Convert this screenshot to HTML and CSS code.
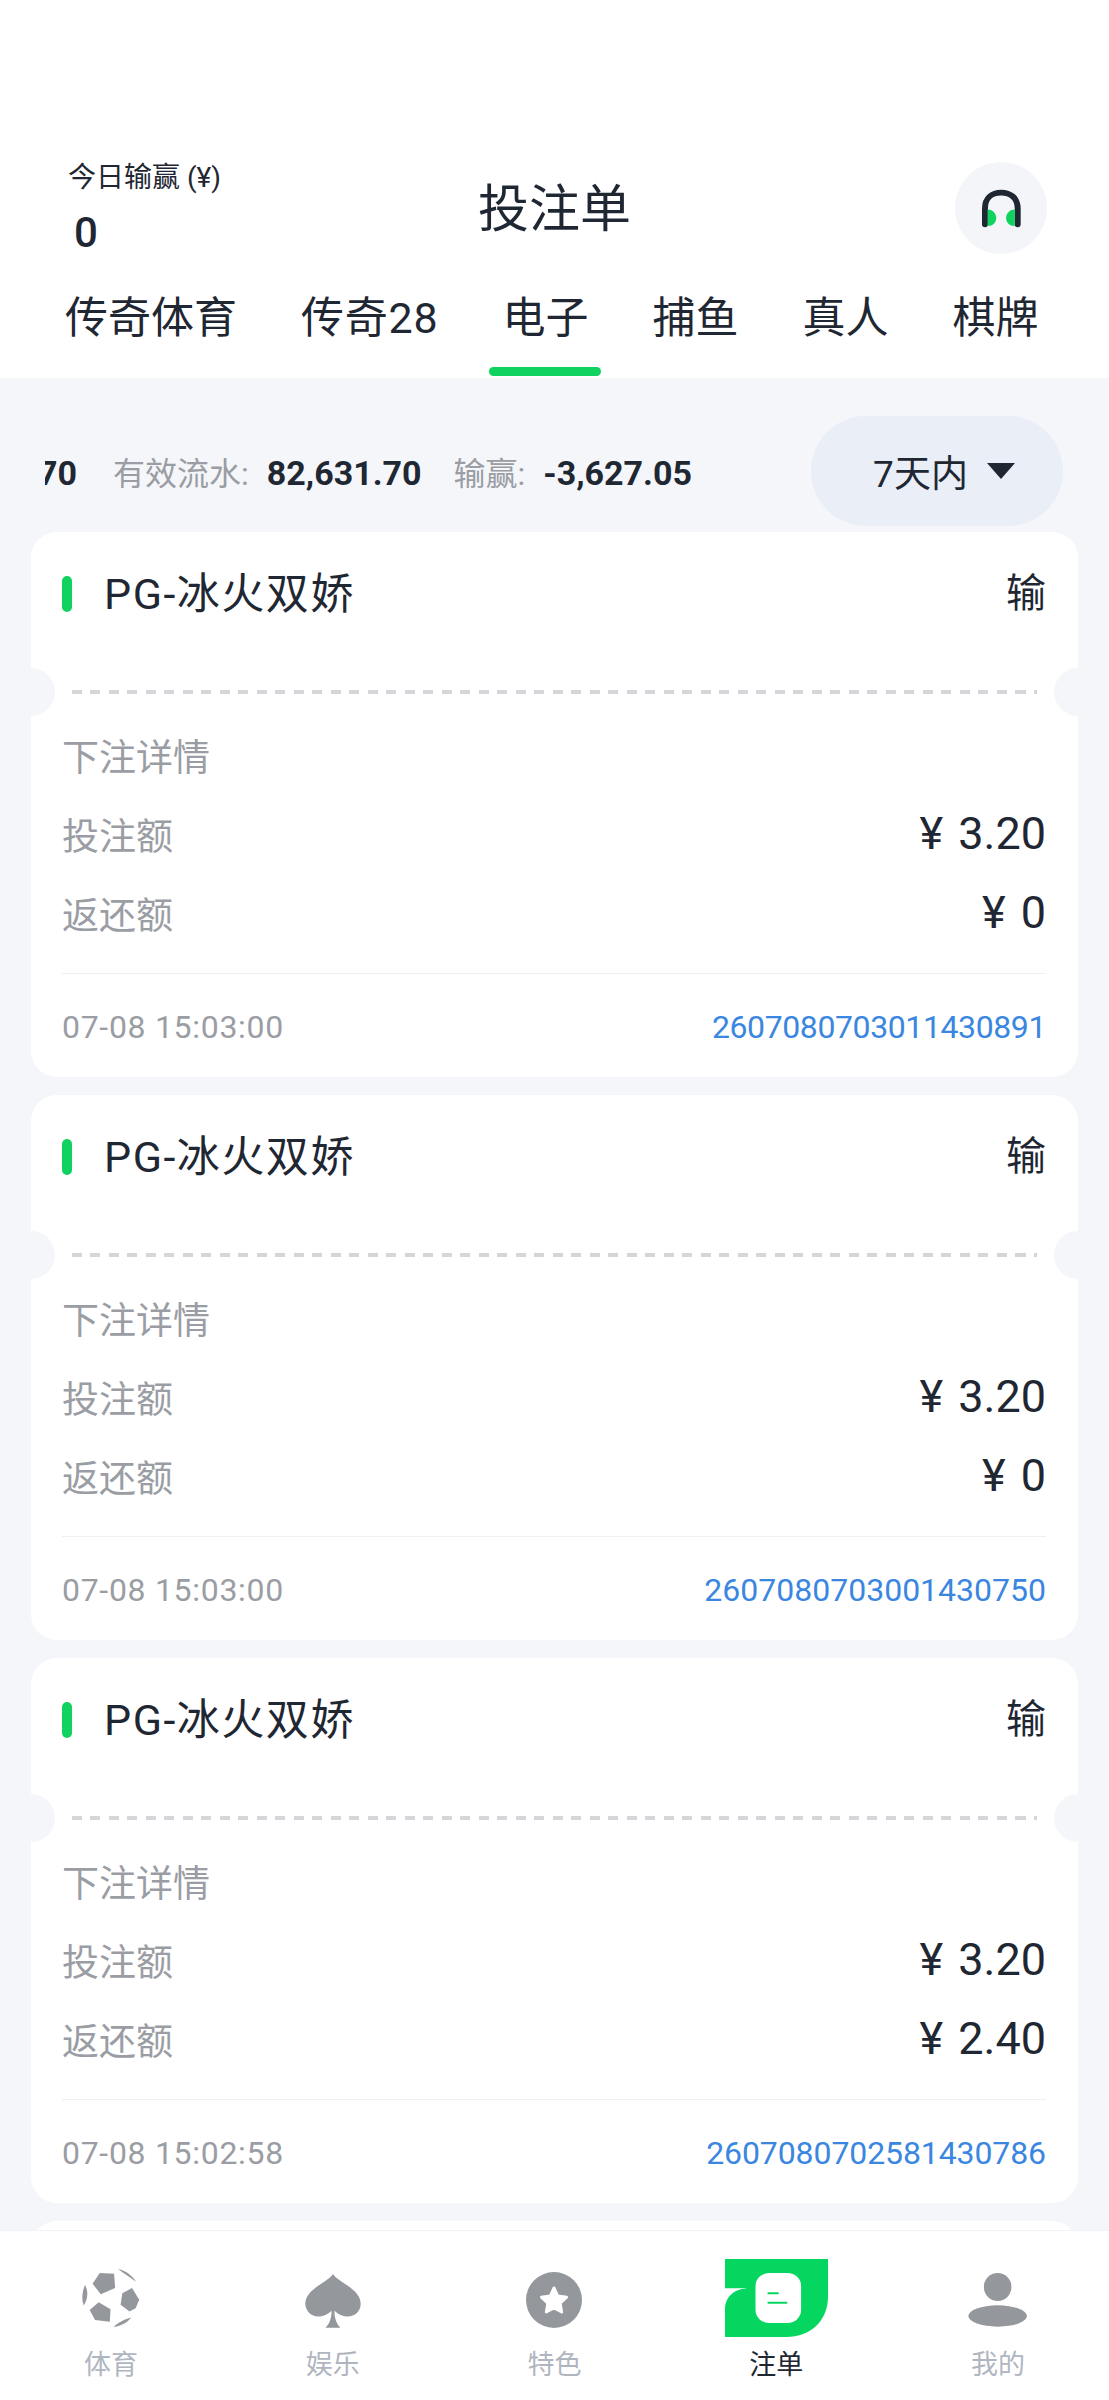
FILE: index.html
```html
<!DOCTYPE html>
<html lang="zh-CN">

<head>
    <meta charset="UTF-8">
    <meta name="viewport" content="width=device-width, initial-scale=1.0">
    <title>投注单</title>
    <link rel="stylesheet" href="styles.css">
</head>

<body>
    <header class="top">
        <div class="title-row">
            <div class="today">
                <div class="today-label">今日输赢 (¥)</div>
                <div class="today-value">0</div>
            </div>
            <h1 class="title">投注单</h1>
            <div class="support">
                <svg width="43" height="41" viewBox="150 110 128 124">
                    <path d="M164 220 V172 C164 140 185 124 213 124 C241 124 263 140 263 172 V220" fill="none" stroke="#1f2733" stroke-width="18" stroke-linecap="round"/>
                    <path d="M172 175 C190 175 198 190 198 200 C198 215 188 225 172 225Z" fill="#0fd25f"/>
                    <path d="M254 175 C236 175 228 190 228 200 C228 215 238 225 254 225Z" fill="#0fd25f"/>
                </svg>
            </div>
        </div>
        <nav class="tabs">
            <span class="tab">传奇体育</span>
            <span class="tab wide">传奇28</span>
            <span class="tab active">电子</span>
            <span class="tab">捕鱼</span>
            <span class="tab">真人</span>
            <span class="tab">棋牌</span>
        </nav>
    </header>

    <main class="content">
        <div class="stats-row">
            <div class="stats">
                <b class="cut">70</b>
                <span class="stat-label">有效流水:</span><b class="stat-value">82,631.70</b>
                <span class="stat-label second">输赢:</span><b class="stat-value">-3,627.05</b>
            </div>
            <div class="range">7天内<i class="arrow"></i></div>
        </div>

        <section class="card">
            <div class="card-head">
                <span class="mark"></span>
                <span class="game">PG-冰火双娇</span>
                <span class="result">输</span>
            </div>
            <div class="dash"></div>
            <div class="detail-title">下注详情</div>
            <div class="line"><span>投注额</span><span class="money">¥ 3.20</span></div>
            <div class="line"><span>返还额</span><span class="money">¥ 0</span></div>
            <div class="card-foot"><span class="time">07-08 15:03:00</span><span class="order tight">2607080703011430891</span></div>
        </section>

        <section class="card">
            <div class="card-head">
                <span class="mark"></span>
                <span class="game">PG-冰火双娇</span>
                <span class="result">输</span>
            </div>
            <div class="dash"></div>
            <div class="detail-title">下注详情</div>
            <div class="line"><span>投注额</span><span class="money">¥ 3.20</span></div>
            <div class="line"><span>返还额</span><span class="money">¥ 0</span></div>
            <div class="card-foot"><span class="time">07-08 15:03:00</span><span class="order">2607080703001430750</span></div>
        </section>

        <section class="card">
            <div class="card-head">
                <span class="mark"></span>
                <span class="game">PG-冰火双娇</span>
                <span class="result">输</span>
            </div>
            <div class="dash"></div>
            <div class="detail-title">下注详情</div>
            <div class="line"><span>投注额</span><span class="money">¥ 3.20</span></div>
            <div class="line"><span>返还额</span><span class="money">¥ 2.40</span></div>
            <div class="card-foot"><span class="time">07-08 15:02:58</span><span class="order mid">2607080702581430786</span></div>
        </section>

        <section class="card"></section>
    </main>

    <footer class="tabbar">
        <div class="nav-item">
            <div class="nav-icon">
                <svg width="61" height="61" viewBox="220 262 170 182" preserveAspectRatio="none" fill="#94979c">
                    <path d="M275 280 L315 282 L318 325 L278 343 L255 312Z"/>
                    <path d="M365 325 L385 360 L375 385 L358 395 L333 375 L338 340Z"/>
                    <path d="M272 367 L305 388 L303 425 L262 420 L247 390Z"/>
                    <path d="M326 267 C350 274 366 288 376 306 C358 290 340 280 326 267Z"/>
                    <path d="M234 316 C226 335 224 358 230 377 C242 360 244 335 234 316Z"/>
                    <path d="M314 441 C335 438 352 428 363 413 C345 418 325 428 314 441Z"/>
                </svg>
            </div>
            <span>体育</span>
        </div>
        <div class="nav-item">
            <div class="nav-icon">
                <svg width="56" height="54" viewBox="850 275 158 162" preserveAspectRatio="none" fill="#94979c">
                    <path d="M929 275 C915 300 850 320 851 365 C852 398 890 420 925 385 C925 410 918 425 908 436 L950 436 C940 425 933 410 933 385 C968 420 1007 398 1007 365 C1008 320 943 300 929 275Z"/>
                </svg>
            </div>
            <span>娱乐</span>
        </div>
        <div class="nav-item">
            <div class="nav-icon">
                <svg width="56" height="56" viewBox="0 0 60 60">
                    <circle cx="30" cy="30" r="30" fill="#94979c"/>
                    <path d="M30 17 L34 25.500 L43.500 27 L36.700 33.500 L38.300 43 L30 38.500 L21.700 43 L23.300 33.500 L16.500 27 L26 25.500Z" fill="#fff" stroke="#fff" stroke-width="3" stroke-linejoin="round"/>
                </svg>
            </div>
            <span>特色</span>
        </div>
        <div class="nav-item current">
            <div class="nav-icon">
                <svg width="103" height="78" viewBox="490 238 287 232" preserveAspectRatio="none">
                    <path d="M490 238 H777 V350 C777 420 730 470 660 470 H490 V390 C490 350 515 325 560 325 H490Z" fill="#05d660"/>
                    <rect x="575" y="280" width="127" height="148" rx="38" fill="#fff"/>
                    <path d="M611 340 H637 M611 368 H661" stroke="#05d660" stroke-width="6" stroke-linecap="round"/>
                </svg>
            </div>
            <span>注单</span>
        </div>
        <div class="nav-item">
            <div class="nav-icon">
                <svg width="60" height="55" viewBox="1170 275 170 165" preserveAspectRatio="none" fill="#94979c">
                    <ellipse cx="1254" cy="317" rx="39" ry="42"/>
                    <ellipse cx="1254" cy="404" rx="83" ry="32"/>
                </svg>
            </div>
            <span>我的</span>
        </div>
    </footer>
</body>

</html>
```

FILE: styles.css
```css
* {
    box-sizing: border-box;
}

html, body {
    height: 2400px;
    overflow: hidden;
}

body {
    margin: 0;
    background-color: #f4f6fa;
    color: #1f2733;
    font-family: Roboto, "Noto Sans CJK SC", sans-serif;
    position: relative;
}

.top {
    height: 378px;
    padding: 150px 0 0;
    background-color: #fff;
}

.title-row {
    display: flex;
    justify-content: space-between;
    align-items: flex-start;
    height: 137px;
    padding: 0 62px 0 68px;
    position: relative;
}

.today-label {
    font-size: 28px;
    line-height: 50px;
    padding-top: 3px;
}

.today-value {
    font-size: 42px;
    font-weight: 500;
    line-height: 54px;
    padding: 3px 0 0 6px;
}

.title {
    position: absolute;
    left: 0;
    right: 0;
    top: 30px;
    margin: 0;
    font-size: 51px;
    font-weight: 400;
    line-height: 60px;
    text-align: center;
}

.support {
    width: 92px;
    height: 92px;
    margin-top: 12px;
    border-radius: 50%;
    background-color: #f3f5f9;
    display: flex;
    align-items: center;
    justify-content: center;
}

.tabs {
    display: flex;
    padding: 0 0 0 65px;
    font-size: 43px;
    line-height: 62px;
    height: 91px;
}

.tab {
    margin-right: 64px;
    white-space: nowrap;
    position: relative;
    height: 91px;
}

.tab.wide {
    letter-spacing: 0.8px;
}

.tab.active::after {
    content: "";
    position: absolute;
    left: -14px;
    right: -12px;
    top: 80px;
    height: 9px;
    border-radius: 5px;
    background-color: #0fd25f;
}

.content {
    height: 2022px;
    overflow: hidden;
    padding: 38px 31px 0;
    display: flex;
    flex-direction: column;
    gap: 18px;
}

.stats-row {
    display: flex;
    align-items: center;
    justify-content: space-between;
    flex: none;
    height: 110px;
    padding: 0 15px 0 14px;
    margin-bottom: -12px;
}

.stats {
    width: 720px;
    overflow: hidden;
    display: flex;
    align-items: baseline;
    white-space: nowrap;
    font-size: 32px;
}

.stats b {
    font-size: 34px;
    font-weight: 700;
    color: #1f2733;
}

.cut {
    margin-left: -7px;
    margin-right: 36px;
}

.stat-label {
    color: #9a9da3;
    margin-right: 18px;
}

.stat-label.second {
    margin-left: 32px;
}

.range {
    width: 252px;
    height: 110px;
    padding-left: 14px;
    border-radius: 55px;
    background-color: #e9eef7;
    display: flex;
    align-items: center;
    justify-content: center;
    gap: 19px;
    font-size: 37px;
}

.arrow {
    width: 0;
    height: 0;
    border-left: 14px solid transparent;
    border-right: 14px solid transparent;
    border-top: 16px solid #1f2733;
}

.card {
    height: 545px;
    flex: none;
    background-color: #fff;
    border-radius: 26px;
    padding: 0 32px 0 31px;
    position: relative;
    overflow: hidden;
}

.card::before,
.card::after {
    content: "";
    position: absolute;
    top: 136px;
    width: 48px;
    height: 48px;
    border-radius: 50%;
    background-color: #f4f6fa;
}

.card::before {
    left: -24px;
}

.card::after {
    right: -24px;
}

.card-head {
    display: flex;
    align-items: center;
    height: 124px;
    font-size: 40px;
}

.mark {
    width: 10px;
    height: 36px;
    border-radius: 5px;
    background-color: #0fd25f;
    margin-right: 32px;
}

.game {
    flex: 1;
    font-size: 43px;
    letter-spacing: 1.500px;
    padding-bottom: 8px;
}

.result {
    padding-bottom: 8px;
}

.dash {
    height: 4px;
    margin: 34px 9px 0 10px;
    background-image: repeating-linear-gradient(90deg, #d5d6d9 0, #d5d6d9 10px, transparent 10px, transparent 18.500px);
}

.detail-title {
    margin-top: 40px;
    font-size: 37px;
    line-height: 50px;
    color: #9a9da3;
}

.line {
    display: flex;
    justify-content: space-between;
    align-items: center;
    height: 79px;
    font-size: 37px;
    color: #9a9da3;
}

.detail-title + .line {
    margin-top: 10px;
}

.money {
    font-size: 45px;
    word-spacing: 4px;
    color: #1f2733;
}

.card-foot {
    margin-top: 21px;
    border-top: 1px solid #eff0f3;
    display: flex;
    justify-content: space-between;
    align-items: center;
    height: 107px;
    font-size: 32px;
    color: #9a9da3;
}

.time {
    letter-spacing: 0.7px;
}

.order {
    color: #3a86e0;
}

.order.tight {
    letter-spacing: -0.4px;
}

.order.mid {
    letter-spacing: -0.1px;
}

.tabbar {
    position: absolute;
    left: 0;
    right: 0;
    bottom: 0;
    height: 170px;
    background-color: #fff;
    border-top: 1px solid #f1f2f5;
    display: grid;
    grid-template-columns: repeat(5, 1fr);
}

.nav-item {
    display: flex;
    flex-direction: column;
    align-items: center;
    font-size: 27px;
    color: #b0b6c0;
}

.nav-icon {
    height: 116px;
    padding-bottom: 19px;
    display: flex;
    align-items: flex-end;
    justify-content: center;
}

.nav-item span {
    line-height: 36px;
}

.nav-item.current {
    color: #1f2733;
}

.nav-item.current .nav-icon {
    padding-bottom: 10px;
}
```
